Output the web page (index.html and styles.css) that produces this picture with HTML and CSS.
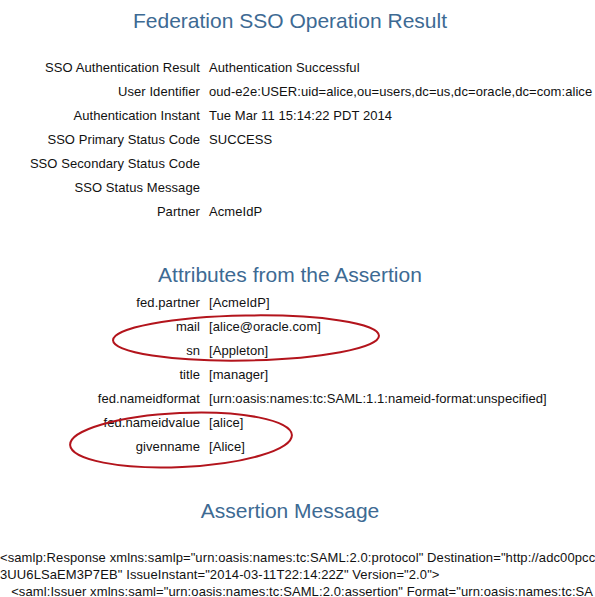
FILE: index.html
```html
<!DOCTYPE html>
<html>
<head>
<meta charset="utf-8">
<title>Federation SSO Operation Result</title>
<link rel="stylesheet" href="styles.css">
</head>
<body>
<div class="page">
  <h1 class="title first">Federation SSO Operation Result</h1>
  <div class="kv result">
    <div class="k">SSO Authentication Result</div><div class="v">Authentication Successful</div>
    <div class="k">User Identifier</div><div class="v">oud-e2e:USER:uid=alice,ou=users,dc=us,dc=oracle,dc=com:alice</div>
    <div class="k">Authentication Instant</div><div class="v">Tue Mar 11 15:14:22 PDT 2014</div>
    <div class="k">SSO Primary Status Code</div><div class="v">SUCCESS</div>
    <div class="k">SSO Secondary Status Code</div><div class="v"></div>
    <div class="k">SSO Status Message</div><div class="v"></div>
    <div class="k">Partner</div><div class="v">AcmeIdP</div>
  </div>

  <h2 class="title second">Attributes from the Assertion</h2>
  <div class="kv attrs">
    <div class="k">fed.partner</div><div class="v">[AcmeIdP]</div>
    <div class="k">mail</div><div class="v">[alice@oracle.com]</div>
    <div class="k">sn</div><div class="v">[Appleton]</div>
    <div class="k">title</div><div class="v">[manager]</div>
    <div class="k">fed.nameidformat</div><div class="v">[urn:oasis:names:tc:SAML:1.1:nameid-format:unspecified]</div>
    <div class="k">fed.nameidvalue</div><div class="v">[alice]</div>
    <div class="k">givenname</div><div class="v">[Alice]</div>
  </div>

  <h2 class="title third">Assertion Message</h2>
  <div class="xml"><div class="line">&lt;samlp:Response xmlns:samlp="urn:oasis:names:tc:SAML:2.0:protocol" Destination="http://adc00pcc</div><div class="line">3UU6LSaEM3P7EB" IssueInstant="2014-03-11T22:14:22Z" Version="2.0"&gt;</div><div class="line">   &lt;saml:Issuer xmlns:saml="urn:oasis:names:tc:SAML:2.0:assertion" Format="urn:oasis:names:tc:SA</div></div>

  <svg class="marks" width="595" height="597" viewBox="0 0 595 597" aria-hidden="true">
    <ellipse cx="246" cy="338" rx="133" ry="22.5" transform="rotate(-1 246 338)"/>
    <ellipse cx="181" cy="440" rx="111" ry="27" transform="rotate(-2.6 181 440)"/>
  </svg>
</div>
</body>
</html>
```

FILE: styles.css
```css
html, body {
  margin: 0;
  padding: 0;
  overflow: hidden;
  background: #ffffff;
}

body {
  font-family: "Liberation Sans", Arial, sans-serif;
  font-size: 13px;
  color: #111111;
}

.page {
  position: relative;
  width: 580px;
  height: 597px;
}

.title {
  margin: 0;
  font-size: 21px;
  line-height: 24px;
  font-weight: normal;
  color: #3d6a93;
  text-align: center;
  white-space: nowrap;
  letter-spacing: 0;
}

.first {
  padding-top: 9px;
}

.second {
  margin-top: 39px;
}

.third {
  margin-top: 40px;
}

.kv {
  display: grid;
  grid-template-columns: 200px auto;
  column-gap: 9px;
  line-height: 24px;
  letter-spacing: 0.07px;
}

.result {
  margin-top: 23px;
}

.attrs {
  margin-top: 4px;
}

.k {
  text-align: right;
  white-space: nowrap;
}

.v {
  white-space: nowrap;
  min-height: 24px;
}

.xml {
  margin-top: 26px;
  line-height: 17px;
  letter-spacing: 0.1px;
}

.line {
  white-space: pre;
}

.marks {
  position: absolute;
  left: 0;
  top: 0;
  pointer-events: none;
}

.marks ellipse {
  fill: none;
  stroke: #b3141c;
  stroke-width: 2;
}
```
